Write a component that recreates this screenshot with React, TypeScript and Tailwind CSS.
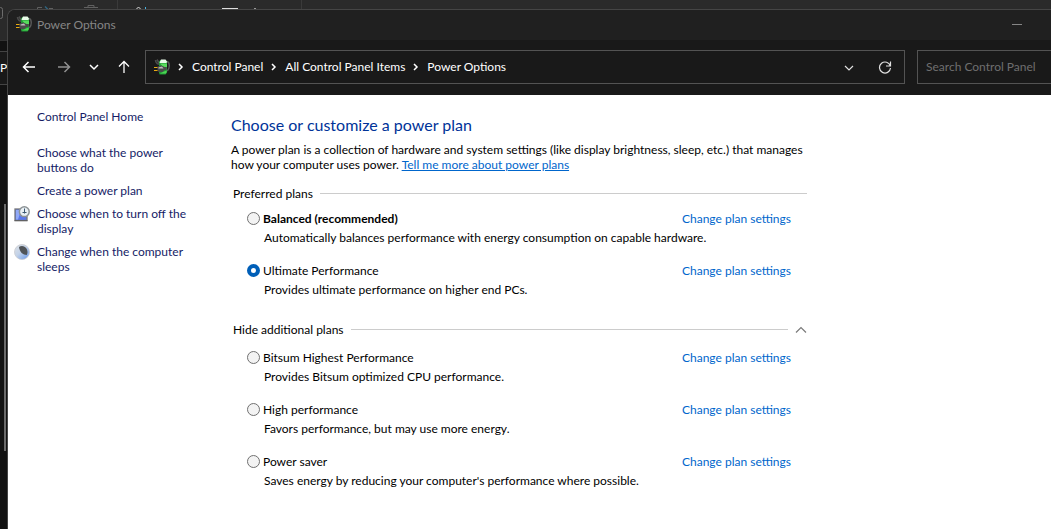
import { useState } from "react"

type Plan = {
  id: string
  name: string
  description: string
}

const preferredPlans: Plan[] = [
  { id: "balanced", name: "Balanced (recommended)", description: "Automatically balances performance with energy consumption on capable hardware." },
  { id: "ultimate", name: "Ultimate Performance", description: "Provides ultimate performance on higher end PCs." },
]

const additionalPlans: Plan[] = [
  { id: "bitsum", name: "Bitsum Highest Performance", description: "Provides Bitsum optimized CPU performance." },
  { id: "high", name: "High performance", description: "Favors performance, but may use more energy." },
  { id: "saver", name: "Power saver", description: "Saves energy by reducing your computer's performance where possible." },
]

function PowerIcon() {
  return (
    <svg width="16" height="16" viewBox="0 0 16 16" fill="none" className="shrink-0">
      <path d="M6 5C4 5.500 1.500 4 1.500 1M3 .5l2 3.500" stroke="#4a4a4a" strokeWidth="1.600" />
      <path d="M13 2.500c3 .8 3 7 .3 9.500" stroke="#5a5a5a" strokeWidth="1.400" />
      <path d="M5 2.500 6.500 1h5L13 2.500v11L11.500 15.500h-6L5 13.500z" fill="#1f9a35" />
      <path d="M5.500 3.500 7 .5h4.500l1.500 2-.5 1.500H6z" fill="#e9fbe9" />
      <path d="M6 4.500h7v3.500H9z" fill="#57dc5c" />
      <path d="M6 14.500h6l1-3-3 1z" fill="#4fd355" />
      <path d="M3.500 7.500l4-1 3 1.500h2v3h-2l-2 2H5l-1.500-1z" fill="#4a4a4a" />
      <path d="M4.500 8.500 8 7.500l1.500 2h-5z" fill="#bdbdbd" />
      <path d="M0 8.500h3.500M0 11.500h3.500" stroke="#e8ab10" strokeWidth="1" />
    </svg>
  )
}

function DisplayIcon() {
  return (
    <svg width="16" height="16" viewBox="0 0 16 16" fill="none" className="shrink-0">
      <rect x="1" y="3" width="12" height="11.500" fill="#5b78ea" stroke="#77777a" strokeWidth="1.300" />
      <path d="M2 4h5L4 13.500H2z" fill="#91a9f7" />
      <path d="M0.500 14.700h13" stroke="#5e5e5e" />
      <circle cx="10.300" cy="5.700" r="4.900" fill="#e9f0f4" stroke="#8d9396" strokeWidth="1.500" />
      <path d="M10.500 2.500v5M8.500 6.500h4" stroke="#3c5870" strokeWidth="1" />
    </svg>
  )
}

function SleepIcon() {
  return (
    <svg width="16" height="16" viewBox="0 0 16 16" fill="none" className="shrink-0">
      <defs>
        <linearGradient id="moon" x1="0" y1="0" x2="1" y2="1">
          <stop offset="0" stopColor="#dfe3e6" />
          <stop offset="0.450" stopColor="#c3d2e8" />
          <stop offset="1" stopColor="#5f94ec" />
        </linearGradient>
      </defs>
      <circle cx="8" cy="8" r="7.500" fill="url(#moon)" stroke="#c9ccd0" strokeWidth="0.800" />
      <path d="M5 3C7.500 1 11.500 2 13 5.500c.8 2.200.6 4-.3 5.500C9 11 5.500 8 5 3z" fill="#505458" />
    </svg>
  )
}

function Crumb({ children }: { children: string }) {
  return (
    <>
      <svg width="6" height="8" viewBox="0 0 6 8" fill="none" className="shrink-0">
        <path d="M1 1l3 3-3 3" stroke="#ffffff" strokeWidth="1.500" />
      </svg>
      <a href="#" className="text-white">{children}</a>
    </>
  )
}

function PlanRow({ plan, selected, onSelect }: { plan: Plan, selected: boolean, onSelect: (id: string) => void }) {
  return (
    <div className="px-4">
      <div className="flex items-center gap-[3px]">
        <input
          type="radio"
          name="plan"
          id={plan.id}
          checked={selected}
          onChange={() => onSelect(plan.id)}
          className="h-[13px] w-[13px] shrink-0 appearance-none rounded-full border border-[#707070] bg-[#f3f3f3] checked:border-4 checked:border-[#005fb8] checked:bg-white"
        />
        <label htmlFor={plan.id} className={plan.id === "balanced" ? "font-bold" : ""}>{plan.name}</label>
        <a href="#" className="ml-auto whitespace-nowrap text-[#0066cc]">Change plan settings</a>
      </div>
      <p className="mt-1 pl-[17px] whitespace-nowrap">{plan.description}</p>
    </div>
  )
}

// Explorer window that sits behind this one
function BackWindow() {
  return (
    <div className="absolute inset-0 bg-[#121212]">
      <div className="flex h-[41px] items-start border-b border-[#333333] bg-[#2a2a2a]">
        <svg width="310" height="20" viewBox="0 0 310 20" fill="none">
          <rect x="-8" y="7.500" width="10.500" height="11" rx="2" stroke="#6c6c6c" />
          <path d="M42 7.500h-4.500v8M49 8.500h4" stroke="#606060" />
          <path d="M45 6.500l4 4" stroke="#2f6580" strokeWidth="1.500" />
          <path d="M84 7.500h14M88 8V5.500h6V8M86 9v6M96 9v6" stroke="#606060" />
          <path d="M117.500 0v20M301.500 0v20" stroke="#3a3a3a" />
          <path d="M135.500 10l3-3 3 3" stroke="#dddddd" />
          <path d="M145.500 7v6" stroke="#4cb3e0" />
          <path d="M222 8.500h16" stroke="#dddddd" />
          <path d="M254 8.500h2" stroke="#999999" />
        </svg>
      </div>
      <div className="mt-[10px] h-[34px] w-12 border-y border-[#444444] bg-[#191919] leading-8 text-white">PI</div>
      <div className="mt-[119px] ml-1 h-[247px] w-[2px] bg-[#6a6a6a]" />
    </div>
  )
}

export default function App() {
  const [selected, setSelected] = useState("ultimate")
  const [showMore, setShowMore] = useState(true)

  return (
    <div className="relative min-h-screen overflow-hidden font-['Lato','Noto_Sans',sans-serif] text-[12px] leading-[15px] text-black">
      <BackWindow />

      <div className="relative flex min-h-screen flex-col pt-[9px] pl-[7px]">
        <div className="flex flex-1 flex-col overflow-hidden rounded-tl-lg border-t border-l border-[#454545] bg-[#191919]">
          <header className="flex h-[30px] items-center gap-[5px] bg-[#202020] pb-[2px] pl-2 text-[#868686]">
            <PowerIcon />
            <h1>Power Options</h1>
            <button aria-label="Minimize" className="mr-[29px] ml-auto">
              <svg width="10" height="10" viewBox="0 0 10 10"><path d="M0 5.500h10" stroke="#868686" /></svg>
            </button>
          </header>

          <nav className="flex h-[55px] items-center gap-3 pb-[2px] pl-[14px]">
            <div className="flex items-center gap-[18px] pr-[2px]">
              <button aria-label="Back">
                <svg width="14" height="14" viewBox="0 0 14 14" fill="none">
                  <path d="M13 7H2M6.500 2l-5 5 5 5" stroke="#ffffff" strokeWidth="1.500" />
                </svg>
              </button>
              <button aria-label="Forward" className="ml-[3px]">
                <svg width="14" height="14" viewBox="0 0 14 14" fill="none">
                  <path d="M1 7h11M7.500 2l5 5-5 5" stroke="#909090" strokeWidth="1.500" />
                </svg>
              </button>
              <button aria-label="Recent locations">
                <svg width="10" height="14" viewBox="0 0 10 14" fill="none">
                  <path d="M1 5l4 4 4-4" stroke="#ffffff" strokeWidth="1.500" />
                </svg>
              </button>
              <button aria-label="Up">
                <svg width="14" height="14" viewBox="0 0 14 14" fill="none">
                  <path d="M7 13V2M2 6.500l5-5 5 5" stroke="#ffffff" strokeWidth="1.300" />
                </svg>
              </button>
            </div>

            <div className="flex h-[34px] flex-1 items-center gap-2 border border-[#535353] pr-3 pl-2 whitespace-nowrap">
              <PowerIcon />
              <Crumb>Control Panel</Crumb>
              <Crumb>All Control Panel Items</Crumb>
              <Crumb>Power Options</Crumb>
              <button aria-label="Previous locations" className="mr-4 ml-auto">
                <svg width="10" height="14" viewBox="0 0 10 14" fill="none">
                  <path d="M1 6l4 4 4-4" stroke="#e0e0e0" strokeWidth="1.200" />
                </svg>
              </button>
              <button aria-label="Refresh">
                <svg width="14" height="14" viewBox="0 0 14 14" fill="none">
                  <path d="M12.300 6A5.500 5.500 0 1 0 12.500 8M12.500 1.500v4.500h-4.500" stroke="#e0e0e0" strokeWidth="1.200" />
                </svg>
              </button>
            </div>

            <input
              type="search"
              aria-label="Search Control Panel"
              placeholder="Search Control Panel"
              className="h-[34px] w-[134px] border border-r-0 border-[#535353] bg-transparent pl-2 text-white outline-none placeholder:text-[#6f6f6f]"
            />
          </nav>

          <div className="flex flex-1 bg-white">
            <aside className="flex w-[223px] shrink-0 flex-col gap-2 pt-[14px] pl-[6px] text-[#151c66]">
              <a href="#" className="mb-[13px] pl-[23px]">Control Panel Home</a>
              <a href="#" className="w-40 pl-[23px]">Choose what the power buttons do</a>
              <a href="#" className="pl-[23px]">Create a power plan</a>
              <a href="#" className="flex w-[184px] items-start gap-[7px]">
                <DisplayIcon />
                <span>Choose when to turn off the display</span>
              </a>
              <a href="#" className="flex w-[184px] items-start gap-[7px]">
                <SleepIcon />
                <span>Change when the computer sleeps</span>
              </a>
            </aside>

            <main className="max-w-[576px] flex-1 pt-[19px] pb-10">
              <h2 className="text-[16px] leading-[22px] text-[#003399]">Choose or customize a power plan</h2>
              <p className="mt-[6px] whitespace-nowrap">
                A power plan is a collection of hardware and system settings (like display brightness, sleep, etc.) that manages<br />
                how your computer uses power. <a href="#" className="text-[#0066cc] underline">Tell me more about power plans</a>
              </p>

              <div className="mt-[14px] flex items-center gap-[7px] pl-[2px]">
                <h3>Preferred plans</h3>
                <div className="h-px flex-1 bg-[#cccccc]" />
              </div>
              <div className="mt-[10px] flex flex-col gap-[18px]">
                {preferredPlans.map((plan) => (
                  <PlanRow key={plan.id} plan={plan} selected={selected === plan.id} onSelect={setSelected} />
                ))}
              </div>

              <button onClick={() => setShowMore(!showMore)} className="mt-[25px] flex w-full items-center gap-[7px] pl-[2px]">
                <span>{showMore ? "Hide" : "Show"} additional plans</span>
                <span className="h-px flex-1 bg-[#cccccc]" />
                <svg width="12" height="8" viewBox="0 0 12 8" fill="none">
                  <path d="M1 6.500l5-5 5 5" stroke="#7a7a7a" strokeWidth="1.200" />
                </svg>
              </button>
              {showMore && (
                <div className="mt-[13px] flex flex-col gap-[18px]">
                  {additionalPlans.map((plan) => (
                    <PlanRow key={plan.id} plan={plan} selected={selected === plan.id} onSelect={setSelected} />
                  ))}
                </div>
              )}
            </main>
          </div>
        </div>
      </div>
    </div>
  )
}
